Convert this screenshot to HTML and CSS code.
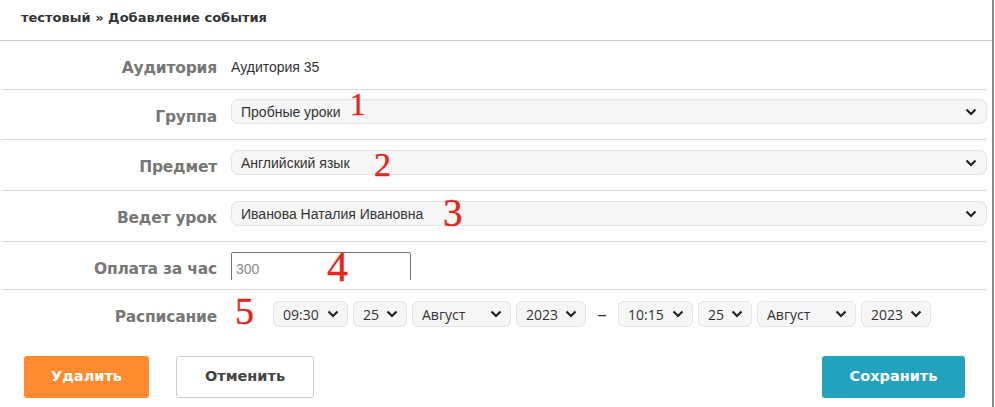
FILE: index.html
```html
<!DOCTYPE html>
<html lang="ru">
<head>
<meta charset="utf-8">
<title>Добавление события</title>
<link rel="stylesheet" href="styles.css">
</head>
<body>
<div class="page">
  <div class="header"><span class="title">тестовый » Добавление события</span></div>

  <div class="form">
    <div class="row">
      <div class="label">Аудитория</div>
      <div class="field field--text"><span class="value">Аудитория 35</span></div>
    </div>
    <div class="row">
      <div class="label">Группа</div>
      <div class="field field--first">
        <div class="select"><span>Пробные уроки</span><svg class="chev" width="12" height="8" viewBox="0 0 12 8"><path d="M1.5 1.5 L6 6 L10.5 1.5"/></svg></div>
      </div>
    </div>
    <div class="row">
      <div class="label">Предмет</div>
      <div class="field field--select">
        <div class="select"><span>Английский язык</span><svg class="chev" width="12" height="8" viewBox="0 0 12 8"><path d="M1.5 1.5 L6 6 L10.5 1.5"/></svg></div>
      </div>
    </div>
    <div class="row">
      <div class="label">Ведет урок</div>
      <div class="field field--select">
        <div class="select"><span>Иванова Наталия Ивановна</span><svg class="chev" width="12" height="8" viewBox="0 0 12 8"><path d="M1.5 1.5 L6 6 L10.5 1.5"/></svg></div>
      </div>
    </div>
    <div class="row">
      <div class="label">Оплата за час</div>
      <div class="field field--input">
        <div class="input-clip"><input class="input" type="text" value="300"></div>
      </div>
    </div>
    <div class="row row--last">
      <div class="label">Расписание</div>
      <div class="field field--schedule">
        <div class="chip chip--time"><span>09:30</span><svg class="chev" width="12" height="8" viewBox="0 0 12 8"><path d="M1.5 1.5 L6 6 L10.5 1.5"/></svg></div>
        <div class="chip chip--day"><span>25</span><svg class="chev" width="12" height="8" viewBox="0 0 12 8"><path d="M1.5 1.5 L6 6 L10.5 1.5"/></svg></div>
        <div class="chip chip--month"><span>Август</span><svg class="chev" width="12" height="8" viewBox="0 0 12 8"><path d="M1.5 1.5 L6 6 L10.5 1.5"/></svg></div>
        <div class="chip chip--year"><span>2023</span><svg class="chev" width="12" height="8" viewBox="0 0 12 8"><path d="M1.5 1.5 L6 6 L10.5 1.5"/></svg></div>
        <span class="dash">–</span>
        <div class="chip chip--time"><span>10:15</span><svg class="chev" width="12" height="8" viewBox="0 0 12 8"><path d="M1.5 1.5 L6 6 L10.5 1.5"/></svg></div>
        <div class="chip chip--day"><span>25</span><svg class="chev" width="12" height="8" viewBox="0 0 12 8"><path d="M1.5 1.5 L6 6 L10.5 1.5"/></svg></div>
        <div class="chip chip--month"><span>Август</span><svg class="chev" width="12" height="8" viewBox="0 0 12 8"><path d="M1.5 1.5 L6 6 L10.5 1.5"/></svg></div>
        <div class="chip chip--year"><span>2023</span><svg class="chev" width="12" height="8" viewBox="0 0 12 8"><path d="M1.5 1.5 L6 6 L10.5 1.5"/></svg></div>
      </div>
    </div>
  </div>

  <div class="actions">
    <div class="actions-left">
      <button class="btn btn--delete">Удалить</button>
      <button class="btn btn--cancel">Отменить</button>
    </div>
    <button class="btn btn--save">Сохранить</button>
  </div>

  <span class="mark mark--1">1</span>
  <span class="mark mark--2">2</span>
  <span class="mark mark--3">3</span>
  <span class="mark mark--4">4</span>
  <span class="mark mark--5">5</span>
</div>
</body>
</html>
```

FILE: styles.css
```css
* { box-sizing: border-box; }

body {
  margin: 0;
  background: #fff;
  font-family: "Liberation Sans", Arial, sans-serif;
  color: #333;
}

.page {
  position: relative;
  width: 994px;
  height: 407px;
  border-right: 2px solid #8b8b8b;
  overflow: hidden;
}

.header {
  height: 41px;
  border-bottom: 1px solid #cfcfcf;
  display: flex;
  align-items: center;
  padding: 0 0 5px 21px;
}

.title {
  font-family: "DejaVu Sans", sans-serif;
  font-weight: bold;
  font-size: 13px;
  color: #333;
}

.form {
  margin: 0 5px 0 2px;
}

.row {
  display: flex;
  align-items: flex-start;
  border-bottom: 1px solid #d6d6d6;
}

.row--last {
  border-bottom: none;
}

.label {
  flex: 0 0 229px;
  padding: 18px 14px 0 0;
  text-align: right;
  font-family: "DejaVu Sans", sans-serif;
  font-weight: bold;
  font-size: 15.5px;
  letter-spacing: -0.2px;
  line-height: 18px;
  color: #777;
}

.field {
  flex: 1;
  min-width: 0;
}

.field--text {
  padding: 18px 0 14px;
  line-height: 16px;
}

.value {
  font-size: 14px;
  color: #333;
}

.field--first {
  padding: 9px 0 15px;
}

.field--select {
  padding: 10px 0 15px;
}

.select {
  height: 25px;
  display: flex;
  align-items: center;
  justify-content: space-between;
  padding: 0 9px 0 9px;
  background: #f6f6f6;
  border: 1px solid #e3e3e3;
  border-radius: 7px;
  font-size: 14px;
  color: #333;
}

.chev {
  flex: none;
  fill: none;
  stroke: #222;
  stroke-width: 2.2;
}

.field--input {
  padding: 10px 0 9px;
}

.input-clip {
  height: 28px;
  overflow: hidden;
}

.input {
  display: block;
  width: 180px;
  height: 34px;
  margin: 0;
  padding: 0 0 0 4px;
  border: 1px solid #767676;
  border-radius: 2px;
  font-family: "Liberation Sans", Arial, sans-serif;
  font-size: 14px;
  color: #888;
  background: #fff;
}

.field--schedule {
  display: flex;
  align-items: center;
  gap: 5px;
  padding: 11px 0 0 42px;
}

.chip {
  height: 26px;
  display: flex;
  align-items: center;
  justify-content: space-between;
  padding: 0 8px 0 9px;
  background: #f6f6f6;
  border: 1px solid #e5e5e5;
  border-radius: 6px;
  font-family: "Open Sans", sans-serif;
  font-size: 14px;
  color: #333;
}

.chip--time { width: 75px; }
.chip--day { width: 54px; }
.chip--month { width: 99px; }
.chip--year { width: 70px; }

.dash {
  width: 22px;
  text-align: center;
  font-family: "Open Sans", sans-serif;
  font-size: 19px;
  line-height: 20px;
  color: #333;
}

.actions {
  display: flex;
  justify-content: space-between;
  align-items: center;
  margin-top: 29px;
  padding: 0 27px 0 24px;
}

.actions-left {
  display: flex;
  gap: 27px;
}

.btn {
  height: 42px;
  border-radius: 3px;
  border: 1px solid transparent;
  font-family: "DejaVu Sans", sans-serif;
  font-weight: bold;
  font-size: 14.5px;
  padding: 0 0 2px;
  cursor: pointer;
}

.btn--delete {
  width: 125px;
  background: #ff8a30;
  color: #fff;
}

.btn--cancel {
  width: 138px;
  background: #fff;
  border-color: #cccccc;
  color: #444;
}

.btn--save {
  width: 143px;
  background: #22a2bd;
  color: #fff;
}

.mark {
  position: absolute;
  font-family: "Liberation Serif", "Times New Roman", serif;
  line-height: 1;
  color: #e3261d;
  -webkit-text-stroke: 0.4px #e3261d;
}

.mark--1 { left: 350px; top: 89px; font-size: 31px; }
.mark--2 { left: 374px; top: 148px; font-size: 34px; }
.mark--3 { left: 443px; top: 193px; font-size: 39px; }
.mark--4 { left: 327px; top: 246px; font-size: 42px; }
.mark--5 { left: 235px; top: 292px; font-size: 38px; }
```
